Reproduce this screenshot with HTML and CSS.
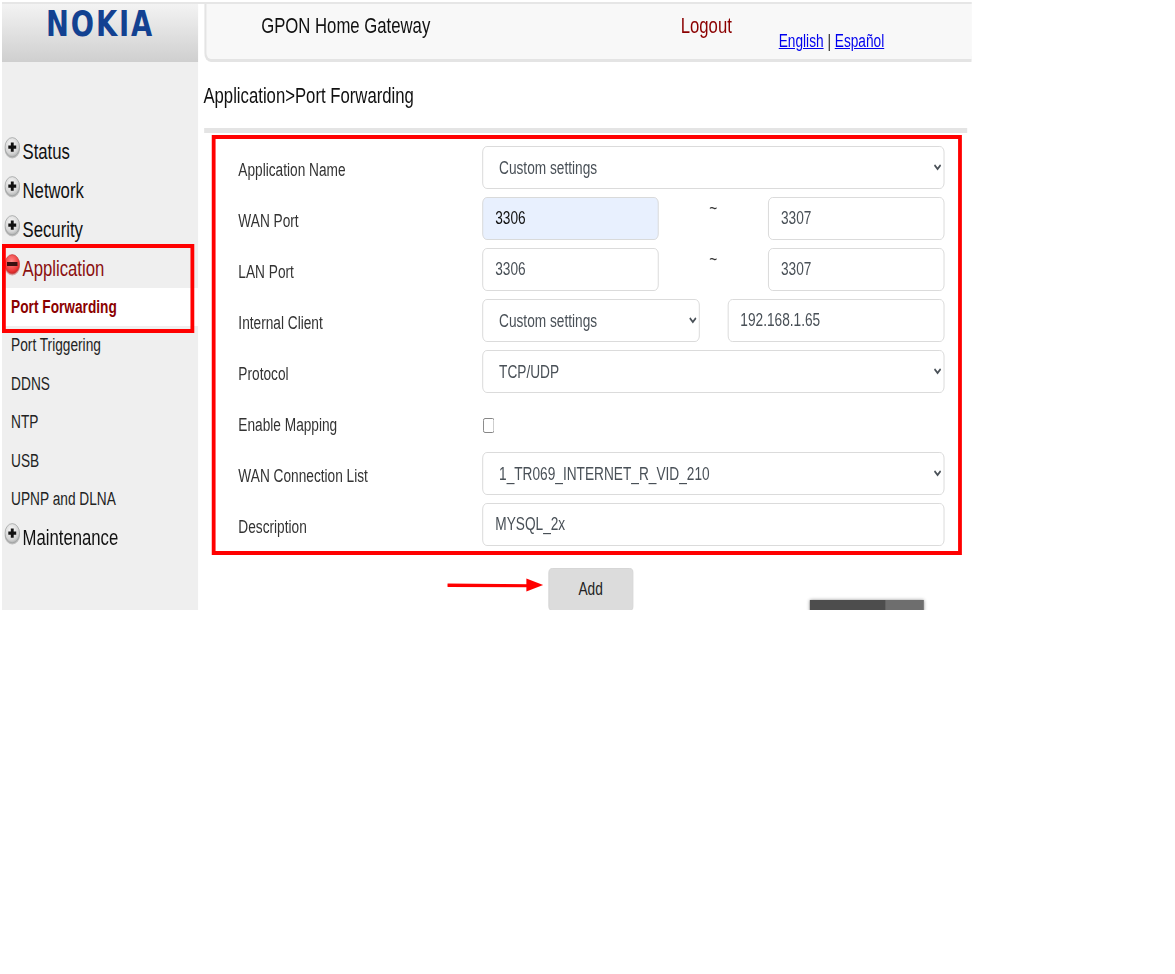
FILE: index.html
```html
<!DOCTYPE html>
<html lang="en">
<head>
    <meta charset="UTF-8">
    <title>GPON Home Gateway</title>
    <link rel="stylesheet" href="styles.css">
</head>
<body>
    <div class="frame">
        <div class="sidebar">
            <div class="logo"><span>NOKIA</span></div>
            <ul class="nav">
                <li class="nav-top">
                    <svg class="toggle" viewBox="0 0 21 22"><use href="#plus-icon"/></svg>Status
                </li>
                <li class="nav-top">
                    <svg class="toggle" viewBox="0 0 21 22"><use href="#plus-icon"/></svg>Network
                </li>
                <li class="nav-top">
                    <svg class="toggle" viewBox="0 0 21 22"><use href="#plus-icon"/></svg>Security
                </li>
                <li class="nav-top open">
                    <svg class="toggle" viewBox="0 0 21 22"><use href="#minus-icon"/></svg>Application
                </li>
                <li class="nav-sub active">Port Forwarding</li>
                <li class="nav-sub">Port Triggering</li>
                <li class="nav-sub">DDNS</li>
                <li class="nav-sub">NTP</li>
                <li class="nav-sub">USB</li>
                <li class="nav-sub">UPNP and DLNA</li>
                <li class="nav-top">
                    <svg class="toggle" viewBox="0 0 21 22"><use href="#plus-icon"/></svg>Maintenance
                </li>
            </ul>
        </div>

        <div class="main">
            <div class="header">
                <div class="header-title">GPON Home Gateway</div>
                <div class="header-logout">Logout</div>
                <div class="header-lang"><a href="#">English</a> | <a href="#">Español</a></div>
            </div>
            <div class="crumb">Application&gt;Port Forwarding</div>
            <div class="rule"></div>

            <form class="port-form">
                <label>Application Name</label>
                <div class="field">
                    <select><option>Custom settings</option></select>
                </div>

                <label>WAN Port</label>
                <div class="field">
                    <input class="short autofill" type="text" value="3306">
                    <span class="tilde">~</span>
                    <input class="short" type="text" value="3307">
                </div>

                <label>LAN Port</label>
                <div class="field">
                    <input class="short" type="text" value="3306">
                    <span class="tilde">~</span>
                    <input class="short" type="text" value="3307">
                </div>

                <label>Internal Client</label>
                <div class="field split">
                    <select><option>Custom settings</option></select>
                    <input type="text" value="192.168.1.65">
                </div>

                <label>Protocol</label>
                <div class="field">
                    <select><option>TCP/UDP</option></select>
                </div>

                <label>Enable Mapping</label>
                <div class="field check">
                    <input type="checkbox">
                </div>

                <label>WAN Connection List</label>
                <div class="field">
                    <select><option>1_TR069_INTERNET_R_VID_210</option></select>
                </div>

                <label>Description</label>
                <div class="field">
                    <input type="text" value="MYSQL_2x">
                </div>
            </form>

            <div class="actions">
                <button type="button">Add</button>
            </div>
        </div>

        <!-- annotations drawn on top of the screenshot -->
        <div class="mark mark-nav"></div>
        <div class="mark mark-form"></div>
        <svg class="mark-arrow" viewBox="0 0 126 14" preserveAspectRatio="none">
            <path d="M0 6.2 L108 7 L108 8.6 L0 8.2 Z" fill="#f00" stroke="#f00" stroke-width="1.5"/>
            <path d="M104 0.5 L126 7 L104 13.5 Z" fill="#f00"/>
        </svg>
        <div class="popup"><span class="popup-dark"></span><span class="popup-light"></span></div>
    </div>

    <svg width="0" height="0" class="defs">
        <defs>
            <radialGradient id="plus-fill" cx="45%" cy="35%" r="70%">
                <stop offset="0" stop-color="#fafafa"/>
                <stop offset="0.7" stop-color="#d4d4d4"/>
                <stop offset="1" stop-color="#a5a8a8"/>
            </radialGradient>
            <radialGradient id="minus-fill" cx="45%" cy="35%" r="70%">
                <stop offset="0" stop-color="#ff8a8a"/>
                <stop offset="0.7" stop-color="#ee3a3a"/>
                <stop offset="1" stop-color="#c01c1c"/>
            </radialGradient>
            <g id="plus-icon">
                <ellipse cx="10.5" cy="12.5" rx="10" ry="9" fill="#bdbdbd"/>
                <circle cx="10.5" cy="10.2" r="9.6" fill="url(#plus-fill)" stroke="#9a9d9d" stroke-width="0.8"/>
                <path d="M8.6 5.4h3.8v3h3.3v3.4h-3.3v3h-3.8v-3H5.3V8.4h3.3z" fill="#111"/>
            </g>
            <g id="minus-icon">
                <ellipse cx="10.5" cy="12.5" rx="10" ry="9" fill="#d9a0a0"/>
                <circle cx="10.5" cy="10.2" r="9.6" fill="url(#minus-fill)" stroke="#c84040" stroke-width="0.8"/>
                <rect x="3.6" y="8" width="13.8" height="4" fill="#3a1010"/>
            </g>
        </defs>
    </svg>
</body>
</html>
```

FILE: styles.css
```css
/* the whole page is squeezed sideways, so widths below are layout px (real px / .76) */
body {
    margin: 0;
    background: #fff;
    font-family: "Liberation Sans", Arial, sans-serif;
    color: #222;
}
.frame {
    position: relative;
    display: flex;
    width: 1276px;
    height: 608px;
    margin: 2px 0 0 2px;
    border-top: 2px solid #e6e6e6;
    box-sizing: border-box;
    overflow: hidden;
    transform: scaleX(.76);
    transform-origin: 0 0;
}
.defs {
    position: absolute;
}

/* sidebar */
.sidebar {
    width: 258px;
    background: #efefef;
}
.logo {
    height: 58px;
    background: linear-gradient(#f3f3f3, #cfcfcf);
    text-align: center;
}
.logo span {
    display: inline-block;
    font-family: "DejaVu Sans", sans-serif;
    font-size: 36px;
    font-weight: bold;
    line-height: 38px;
    letter-spacing: 2.5px;
    color: #124191;
    margin-top: 1px;
}
.nav {
    list-style: none;
    margin: 0;
    padding: 70px 0 0;
}
.nav-top {
    display: flex;
    align-items: center;
    height: 39px;
    padding-left: 3px;
    font-size: 22px;
    color: #111;
}
.nav-top.open {
    color: #8b1010;
}
.toggle {
    flex: none;
    width: 21px;
    height: 22px;
    margin: -7px 3px 0 0;
}
.nav-sub {
    height: 38.4px;
    line-height: 38.4px;
    padding-left: 12px;
    font-size: 18px;
    color: #222;
}
.nav-sub.active {
    background: #fff;
    color: #8b0000;
    font-weight: bold;
}

/* top bar */
.main {
    width: 1010px;
    margin-left: 8px;
}
.header {
    display: flex;
    height: 58px;
    padding-left: 72px;
    box-sizing: border-box;
    background: #f8f8f8;
    border-left: 3px solid #e4e4e4;
    border-bottom: 3px solid #e4e4e4;
    border-bottom-left-radius: 9px;
}
.header-title {
    width: 552px;
    font-size: 22px;
    line-height: 44px;
    color: #111;
}
.header-logout {
    width: 129px;
    font-size: 22px;
    line-height: 44px;
    color: #8b0000;
}
.header-lang {
    font-size: 18px;
    line-height: 22px;
    padding-top: 26px;
}
.header-lang a {
    color: #00e;
}
.crumb {
    height: 66px;
    line-height: 68px;
    margin-left: -1px;
    font-size: 22px;
    color: #111;
}
.rule {
    width: 1004px;
    height: 5px;
    background: #e4e4e4;
}

/* form */
.port-form {
    display: grid;
    grid-template-columns: 321px 608px;
    gap: 8px 0;
    padding: 13px 0 0 45px;
    font-size: 18px;
}
.port-form label {
    padding-top: 14px;
    color: #333;
}
.field {
    display: flex;
    justify-content: space-between;
    height: 43px;
}
.field select,
.field input[type="text"] {
    width: 100%;
    height: 43px;
    box-sizing: border-box;
    border: 1px solid #d6d6d6;
    border-radius: 6px;
    background: #fff;
    font: 18px "Liberation Sans", Arial, sans-serif;
    color: #495057;
}
.field select {
    padding-left: 17px;
}
.field input[type="text"] {
    padding-left: 16px;
}
.field input.short {
    width: 232px;
}
.field input.autofill {
    background: #e8f0fe;
    color: #111;
}
.tilde {
    width: 145px;
    text-align: center;
    line-height: 22px;
    color: #333;
}
.field.split {
    gap: 37px;
}
.field.split select,
.field.split input[type="text"] {
    width: 286px;
}
.field.check {
    align-items: center;
    justify-content: flex-start;
}
.field.check input {
    width: 15px;
    height: 15px;
    margin: 5px 0 0 1px;
}

.actions {
    width: 1017px;
    padding-top: 22px;
    text-align: center;
}
.actions button {
    width: 112px;
    height: 43px;
    border: 1px solid #d4d4d4;
    border-radius: 5px;
    background: #dcdcdc;
    font: 18px "Liberation Sans", Arial, sans-serif;
    color: #222;
}

/* annotations */
.mark {
    position: absolute;
    box-sizing: border-box;
    border: solid #f00;
    border-width: 4px 5px;
}
.mark-nav {
    left: 0;
    top: 240px;
    width: 253px;
    height: 89px;
}
.mark-form {
    left: 276px;
    top: 131px;
    width: 987px;
    height: 420px;
}
.mark-arrow {
    position: absolute;
    left: 586px;
    top: 574px;
    width: 126px;
    height: 14px;
}
.popup {
    position: absolute;
    left: 1063px;
    top: 596px;
    display: flex;
    width: 150px;
    height: 12px;
    box-shadow: 0 0 4px rgba(0, 0, 0, .45);
}
.popup-dark {
    width: 100px;
    background: #4d4d4d;
}
.popup-light {
    flex: 1;
    background: #6e6e6e;
}
```
